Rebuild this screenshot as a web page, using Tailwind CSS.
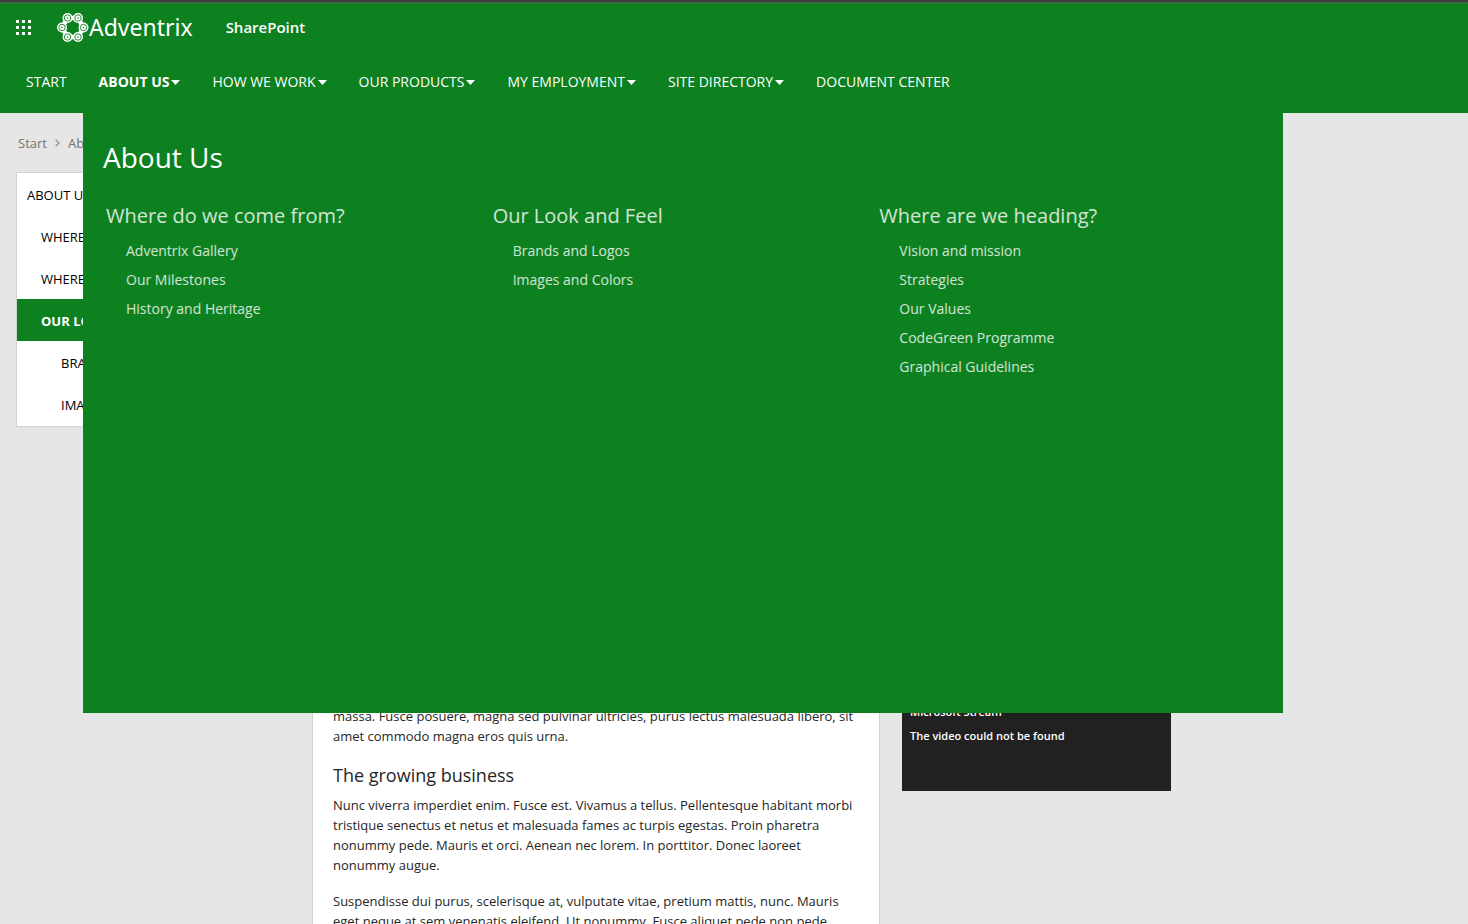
<!DOCTYPE html>
<html lang="en">
<head>
<meta charset="utf-8">
<title>About Us - Adventrix</title>
<script src="https://cdn.jsdelivr.net/npm/@tailwindcss/browser@4"></script>
</head>
<body class="flex h-screen flex-col overflow-hidden bg-[#e6e6e6] font-['Open_Sans',sans-serif] text-[13px] leading-5 text-[#262626]">
<header class="relative z-10 shrink-0 border-t-2 border-[#3f3f3f] bg-[#0d8020] text-white">
  <div class="flex h-[49px] items-center border-t border-[#5a5a5a]">
    <button type="button" aria-label="App launcher" class="flex h-12 w-[47px] items-center justify-center">
      <svg class="h-[15px] w-[15px]" viewBox="0 0 15 15" fill="currentColor" aria-hidden="true">
        <path d="M0 0h3v3H0zM6 0h3v3H6zM12 0h3v3h-3zM0 6h3v3H0zM6 6h3v3H6zM12 6h3v3h-3zM0 12h3v3H0zM6 12h3v3H6zM12 12h3v3h-3z"/>
      </svg>
    </button>
    <a href="#" class="ml-[9px] flex items-center">
      <svg class="h-[31px] w-[33px]" viewBox="0 0 33 31" fill="none" aria-hidden="true">
        <path d="M11.500 6h10.500L27.500 15.500 22 25H11.500L6 15.500z" stroke="#fff" stroke-width="4.500"/>
        <g fill="#fff">
          <circle cx="11.500" cy="6" r="5"/><circle cx="22" cy="6" r="5"/>
          <circle cx="6" cy="15.500" r="5"/><circle cx="27.500" cy="15.500" r="5"/>
          <circle cx="11.500" cy="25" r="5"/><circle cx="22" cy="25" r="5"/>
        </g>
        <g stroke="#0d8020" stroke-width=".9" fill="#fff">
          <circle cx="11.500" cy="6" r="3.200"/><circle cx="22" cy="6" r="3.200"/>
          <circle cx="6" cy="15.500" r="3.200"/><circle cx="27.500" cy="15.500" r="3.200"/>
          <circle cx="11.500" cy="25" r="3.200"/><circle cx="22" cy="25" r="3.200"/>
        </g>
        <g fill="#0d8020">
          <circle cx="11.500" cy="6" r=".8"/><circle cx="22" cy="6" r=".8"/>
          <circle cx="6" cy="15.500" r=".8"/><circle cx="27.500" cy="15.500" r=".8"/>
          <circle cx="11.500" cy="25" r=".8"/><circle cx="22" cy="25" r=".8"/>
        </g>
      </svg>
      <span class="font-['Noto_Sans',sans-serif] text-[23px] leading-8">Adventrix</span>
    </a>
    <a href="#" class="ml-[33px] text-[15px] font-semibold">SharePoint</a>
  </div>
  <nav aria-label="Main" class="flex h-[62px] items-center px-[10px] text-sm">
    <a href="#" class="px-4">START</a>
    <a href="#" class="flex items-center gap-0.5 px-4 font-bold" aria-expanded="true">ABOUT US
      <svg class="h-[5px] w-[9px]" viewBox="0 0 9 5" fill="currentColor" aria-hidden="true"><path d="M0 0h9L4.500 5z"/></svg></a>
    <a href="#" class="flex items-center gap-0.5 px-4">HOW WE WORK
      <svg class="h-[5px] w-[9px]" viewBox="0 0 9 5" fill="currentColor" aria-hidden="true"><path d="M0 0h9L4.500 5z"/></svg></a>
    <a href="#" class="flex items-center gap-0.5 px-4">OUR PRODUCTS
      <svg class="h-[5px] w-[9px]" viewBox="0 0 9 5" fill="currentColor" aria-hidden="true"><path d="M0 0h9L4.500 5z"/></svg></a>
    <a href="#" class="flex items-center gap-0.5 px-4">MY EMPLOYMENT
      <svg class="h-[5px] w-[9px]" viewBox="0 0 9 5" fill="currentColor" aria-hidden="true"><path d="M0 0h9L4.500 5z"/></svg></a>
    <a href="#" class="flex items-center gap-0.5 px-4">SITE DIRECTORY
      <svg class="h-[5px] w-[9px]" viewBox="0 0 9 5" fill="currentColor" aria-hidden="true"><path d="M0 0h9L4.500 5z"/></svg></a>
    <a href="#" class="px-4">DOCUMENT CENTER</a>
  </nav>

  <!-- Mega menu, opened under the "About us" tab -->
  <section aria-label="About Us menu" class="absolute left-[83px] top-full h-[600px] w-[1200px] bg-[#0d8020] px-5 pt-6">
    <h2 class="text-[28px] leading-10"><a href="#">About Us</a></h2>
    <div class="mt-[25px] grid grid-cols-3 font-medium text-white/80">
      <div class="px-[3px]">
        <h3 class="text-xl leading-7"><a href="#">Where do we come from?</a></h3>
        <ul class="mt-1.5 pl-5 text-sm leading-[29px]">
          <li><a href="#">Adventrix Gallery</a></li>
          <li><a href="#">Our Milestones</a></li>
          <li><a href="#">History and Heritage</a></li>
        </ul>
      </div>
      <div class="px-[3px]">
        <h3 class="text-xl leading-7"><a href="#">Our Look and Feel</a></h3>
        <ul class="mt-1.5 pl-5 text-sm leading-[29px]">
          <li><a href="#">Brands and Logos</a></li>
          <li><a href="#">Images and Colors</a></li>
        </ul>
      </div>
      <div class="px-[3px]">
        <h3 class="text-xl leading-7"><a href="#">Where are we heading?</a></h3>
        <ul class="mt-1.5 pl-5 text-sm leading-[29px]">
          <li><a href="#">Vision and mission</a></li>
          <li><a href="#">Strategies</a></li>
          <li><a href="#">Our Values</a></li>
          <li><a href="#">CodeGreen Programme</a></li>
          <li><a href="#">Graphical Guidelines</a></li>
        </ul>
      </div>
    </div>
  </section>
</header>

<div class="flex min-h-0 flex-1 flex-col px-4">
  <nav aria-label="Breadcrumb" class="flex h-[59px] shrink-0 items-center gap-2 px-0.5 text-[#737373]">
    <a href="#">Start</a>
    <svg class="h-2 w-[5px]" viewBox="0 0 5 8" fill="none" stroke="#999" stroke-width="1.500" aria-hidden="true"><path d="M.7.7 4 4 .7 7.300"/></svg>
    <a href="#">About Us</a>
  </nav>
  <div class="flex min-h-0 flex-1 items-start">
    <nav aria-label="Section" class="w-[272px] shrink-0 border border-[#d2d2d2] bg-white text-black">
      <ul class="uppercase">
        <li><a href="#" class="block pt-3 pb-[10px] pl-[10px]">About Us</a></li>
        <li><a href="#" class="block pt-3 pb-[10px] pl-6">Where do we come from?</a></li>
        <li><a href="#" class="block pt-3 pb-[10px] pl-6">Where are we heading?</a></li>
        <li><a href="#" aria-current="page" class="block bg-[#0d8020] pt-3 pb-[10px] pl-6 font-bold text-white">Our Look and Feel</a></li>
        <li><a href="#" class="block pt-3 pb-[10px] pl-11">Brands and Logos</a></li>
        <li><a href="#" class="block pt-3 pb-[11px] pl-11">Images and Colors</a></li>
      </ul>
    </nav>
    <main class="ml-6 w-[568px] shrink-0 border border-[#d2d2d2] bg-white px-5 pt-[533px]">
      <p>massa. Fusce posuere, magna sed pulvinar ultricies, purus lectus malesuada libero, sit amet commodo magna eros quis urna.</p>
      <h2 class="mt-4 text-lg leading-[26px]">The growing business</h2>
      <p class="mt-[7px]">Nunc viverra imperdiet enim. Fusce est. Vivamus a tellus. Pellentesque habitant morbi tristique senectus et netus et malesuada fames ac turpis egestas. Proin pharetra nonummy pede. Mauris et orci. Aenean nec lorem. In porttitor. Donec laoreet nonummy augue.</p>
      <p class="mt-4">Suspendisse dui purus, scelerisque at, vulputate vitae, pretium mattis, nunc. Mauris eget neque at sem venenatis eleifend. Ut nonummy. Fusce aliquet pede non pede.</p>
    </main>
    <aside class="ml-[22px] w-[269px] shrink-0 bg-[#212121] px-2 pb-[43px] pt-[528px] text-[11px] leading-6 font-semibold text-white">
      <p>Microsoft Stream</p>
      <p>The video could not be found</p>
    </aside>
  </div>
</div>
</body>
</html>
